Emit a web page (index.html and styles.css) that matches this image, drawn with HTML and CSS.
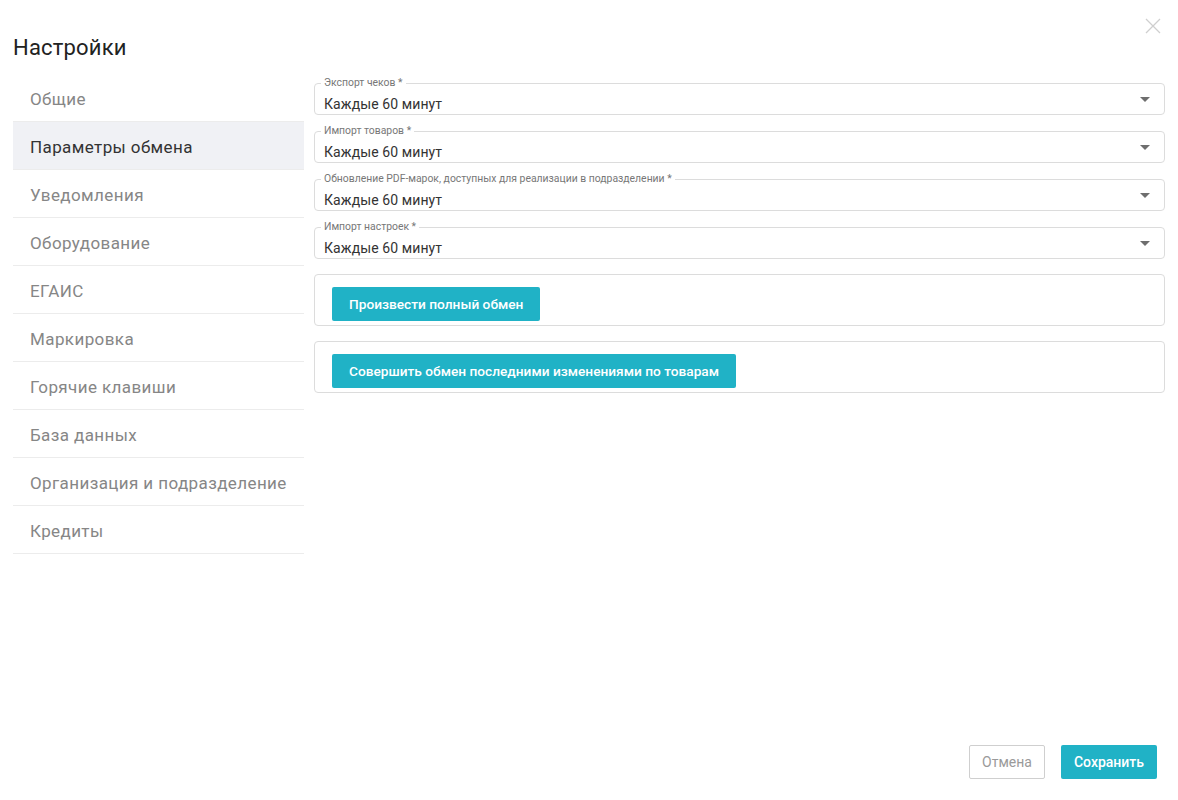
FILE: index.html
```html
<!DOCTYPE html>
<html lang="ru">
<head>
<meta charset="utf-8">
<link rel="stylesheet" href="styles.css">
</head>
<body>
<div class="dialog">
  <button class="close" aria-label="Закрыть">
    <svg width="16" height="16" viewBox="0 0 16 16"><path d="M1 1L15 15M15 1L1 15" stroke="#cfcfcf" stroke-width="1.3" fill="none"/></svg>
  </button>
  <h1 class="title">Настройки</h1>
  <div class="body">
    <nav class="menu">
      <div class="item">Общие</div>
      <div class="item active">Параметры обмена</div>
      <div class="item">Уведомления</div>
      <div class="item">Оборудование</div>
      <div class="item">ЕГАИС</div>
      <div class="item">Маркировка</div>
      <div class="item">Горячие клавиши</div>
      <div class="item">База данных</div>
      <div class="item">Организация и подразделение</div>
      <div class="item">Кредиты</div>
    </nav>
    <div class="content">
      <fieldset class="field">
        <legend>Экспорт чеков *</legend>
        <span class="value">Каждые 60 минут</span>
        <span class="caret"></span>
      </fieldset>
      <fieldset class="field">
        <legend>Импорт товаров *</legend>
        <span class="value">Каждые 60 минут</span>
        <span class="caret"></span>
      </fieldset>
      <fieldset class="field">
        <legend>Обновление PDF-марок, доступных для реализации в подразделении *</legend>
        <span class="value">Каждые 60 минут</span>
        <span class="caret"></span>
      </fieldset>
      <fieldset class="field">
        <legend>Импорт настроек *</legend>
        <span class="value">Каждые 60 минут</span>
        <span class="caret"></span>
      </fieldset>
      <div class="box"><button class="btn primary">Произвести полный обмен</button></div>
      <div class="box"><button class="btn primary">Совершить обмен последними изменениями по товарам</button></div>
    </div>
  </div>
  <div class="footer">
    <button class="btn outline">Отмена</button>
    <button class="btn primary">Сохранить</button>
  </div>
</div>
</body>
</html>
```
FILE: styles.css
```css
* { box-sizing: border-box; }
html, body { margin: 0; padding: 0; background: #fff; }
body { font-family: Roboto, "Noto Sans", Arial, sans-serif; color: #333; }

.dialog {
  position: relative;
  height: 800px;
  display: flex;
  flex-direction: column;
  padding: 33px 13px 21px 13px;
}

.close {
  position: absolute;
  top: 18px;
  right: 17px;
  border: 0;
  background: none;
  padding: 0;
  width: 16px;
  height: 16px;
  cursor: pointer;
}
.close svg { display: block; }

.title {
  margin: 0;
  font-size: 22px;
  font-weight: 400;
  line-height: 30px;
  color: #222;
  height: 41px;
  letter-spacing: 0.2px;
}

.body {
  display: flex;
  gap: 10px;
  align-items: flex-start;
}

.menu {
  width: 291px;
  flex: none;
  display: flex;
  flex-direction: column;
}
.item {
  height: 48px;
  line-height: 50px;
  padding-left: 17px;
  font-size: 17px;
  letter-spacing: 0.4px;
  color: #868686;
  border-bottom: 1px solid #ececec;
}
.item.active {
  background: #f0f1f5;
  color: #333;
}

.content {
  flex: 1;
  display: flex;
  flex-direction: column;
  gap: 10px;
  padding-top: 3px;
}

.field {
  position: relative;
  margin: 0;
  height: 38px;
  padding: 0 9px;
  border: 1px solid #dcdcdc;
  border-radius: 4px;
  display: flex;
  align-items: flex-start;
}
.field legend {
  font-size: 10.4px;
  line-height: 12px;
  color: #777;
  padding: 0 3px;
  margin-left: -3px;
}
.field .value {
  font-size: 14px;
  line-height: 18px;
  color: #333;
  margin-top: 6px;
  letter-spacing: 0.1px;
}
.caret {
  position: absolute;
  right: 14px;
  top: 8px;
  width: 0;
  height: 0;
  border-left: 5px solid transparent;
  border-right: 5px solid transparent;
  border-top: 5px solid #6e6e6e;
}

.box {
  border: 1px solid #dcdcdc;
  border-radius: 4px;
  height: 52px;
  padding: 12px 17px 0;
  margin-top: 5px;
}
.box + .box { margin-top: 5px; }

.btn {
  font-family: Roboto, "Noto Sans", Arial, sans-serif;
  height: 34px;
  padding: 0 17px;
  font-size: 13.7px;
  font-weight: 500;
  border-radius: 2px;
  cursor: pointer;
}
.btn.primary {
  background: #20b2c6;
  color: #fff;
  border: 0;
}
.btn.outline {
  background: #fff;
  border: 1px solid #cfcfcf;
  color: #9a9a9a;
  font-weight: 400;
  font-size: 14px;
  padding: 0 12px;
}

.footer {
  margin-top: auto;
  display: flex;
  justify-content: flex-end;
  gap: 16px;
  padding-right: 8px;
}
.footer .btn.primary { font-size: 14px; padding: 0 13px; }
```
